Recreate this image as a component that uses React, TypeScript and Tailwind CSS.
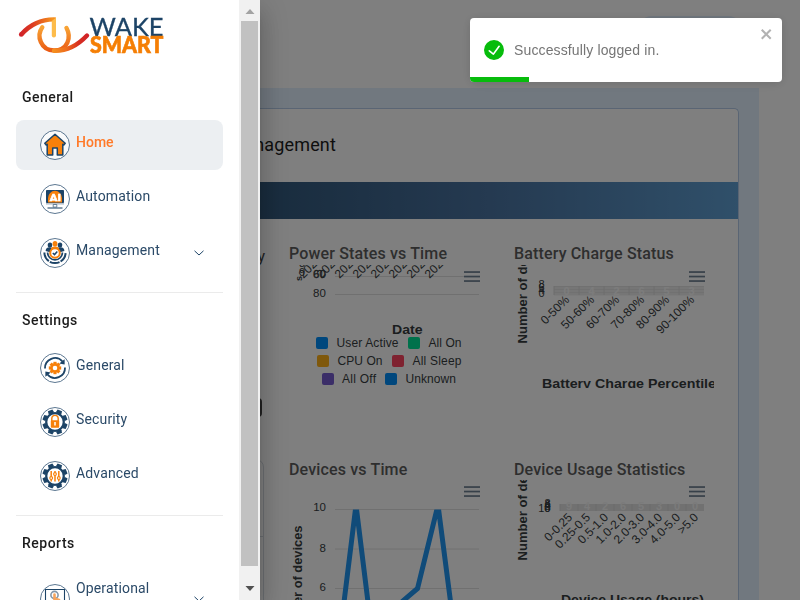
import type { ReactNode } from "react";

const NAVY = "#1d4467";
const ORANGE = "#f7800a";

function Badge({ children }: { children: ReactNode }) {
  return (
    <svg className="size-[30px] shrink-0" viewBox="0 0 30 30" fill="none">
      <circle cx="15" cy="15" r="14.5" fill="#fff" fillOpacity="0.7" stroke="#4a6884" strokeWidth="0.9" />
      {children}
    </svg>
  );
}

function HomeIcon() {
  return (
    <Badge>
      <path
        d="M15 4.2 L25.2 13.2 L23.8 15 L22.8 14.2 V25 H17.3 V18 H12.7 V25 H7.2 V14.2 L6.2 15 L4.8 13.2 Z"
        fill={ORANGE}
        stroke={NAVY}
        strokeWidth="1.5"
        strokeLinejoin="round"
      />
    </Badge>
  );
}

function AutomationIcon() {
  return (
    <Badge>
      <rect x="6" y="6" width="18" height="13" rx="0.8" fill={NAVY} />
      <path d="M8 18.4 V14 a7 7.2 0 0 1 14 0 V18.4 Z" fill={ORANGE} />
      <text x="9.8" y="16.8" fontSize="8.5" fontWeight="900" textLength="11" lengthAdjust="spacingAndGlyphs" fill="#fff" stroke="#fff" strokeWidth="0.4" fontFamily="Roboto, sans-serif">
        AI
      </text>
      <rect x="6" y="19" width="18" height="1.6" fill="#b7c2cd" />
      <path d="M13.2 20.5 h3.6 v2.6 h-3.6 z" stroke="#4a6884" strokeWidth="0.8" />
      <path d="M7.5 24 h15" stroke="#4a6884" strokeWidth="1.3" />
    </Badge>
  );
}

function ManagementIcon() {
  return (
    <Badge>
      <ellipse cx="10" cy="7" rx="2.3" ry="2.6" fill={NAVY} />
      <ellipse cx="20" cy="7" rx="2.3" ry="2.6" fill={NAVY} />
      <path d="M5.6 13 q0-3.8 4-3.8 t3.4 3 l-3 2z M24.4 13 q0-3.8-4-3.8 t-3.4 3 l3 2z" fill={NAVY} />
      <ellipse cx="15" cy="5.8" rx="2.4" ry="2.8" fill={ORANGE} />
      <path d="M10.8 11.8 q0-3.4 4.2-3.4 t4.2 3.4z" fill={ORANGE} />
      <circle cx="15" cy="15" r="4.8" fill="#fff" stroke={ORANGE} strokeWidth="2" />
      <path d="M12.8 15 l1.7 1.6 2.8-3.2" stroke={NAVY} strokeWidth="1.5" />
      <path d="M7.6 14.5 a7.4 7.4 0 0 0 14.8 0" stroke={NAVY} strokeWidth="1.7" />
      <path d="M4.4 14.5 a10.6 10.6 0 0 0 21.2 0" stroke={NAVY} strokeWidth="2" strokeDasharray="10 1.2" />
    </Badge>
  );
}

const TEETH = [0, 45, 90, 135, 180, 225, 270, 315];

function GeneralIcon() {
  return (
    <Badge>
      <path d="M5 15.5 a10 10 0 0 1 17.5-7" stroke={NAVY} strokeWidth="1.8" />
      <path d="M24.6 6.3 l0 5.2 -5.4-1z" fill={NAVY} />
      <path d="M25 14.5 a10 10 0 0 1-17.5 7" stroke={NAVY} strokeWidth="1.8" />
      <path d="M5.4 23.7 l0-5.2 5.4 1z" fill={NAVY} />
      {TEETH.map((a) => (
        <rect key={a} x="13.4" y="8.8" width="3.2" height="3" fill={ORANGE} transform={`rotate(${a} 15 15)`} />
      ))}
      <circle cx="15" cy="15" r="3.5" stroke={ORANGE} strokeWidth="2.4" />
    </Badge>
  );
}

function BigGear() {
  return (
    <>
      {TEETH.map((a) => (
        <path key={a} d="M12.6 2.4 h4.8 l0.4 2.4 l-1 2.7 h-3.6 l-1-2.7z" fill={NAVY} transform={`rotate(${a + 22.5} 15 15)`} />
      ))}
      <circle cx="15" cy="15" r="8.8" fill="#fff" stroke={NAVY} strokeWidth="2.3" />
    </>
  );
}

function SecurityIcon() {
  return (
    <Badge>
      <BigGear />
      <path d="M11.8 14 v-2.4 a3.2 3.2 0 0 1 6.4 0 V14" stroke={ORANGE} strokeWidth="1.4" />
      <rect x="10.8" y="13.2" width="8.4" height="7.6" rx="0.8" fill={ORANGE} />
      <path d="M15 15 v3.4" stroke="#fff" strokeWidth="1.5" />
    </Badge>
  );
}

function AdvancedIcon() {
  return (
    <Badge>
      <BigGear />
      <path d="M11.2 10 v10.5 M15 10 v10.5 M18.8 10 v10.5" stroke={ORANGE} strokeWidth="1.5" />
      <g fill="#fff" stroke={ORANGE} strokeWidth="1.1">
        <circle cx="11.2" cy="17" r="1.4" />
        <circle cx="15" cy="13" r="1.4" />
        <circle cx="18.8" cy="17" r="1.4" />
      </g>
    </Badge>
  );
}

function OperationalIcon() {
  return (
    <Badge>
      <path d="M5.5 23 V5.5 h19 V23" stroke={NAVY} strokeWidth="1.1" />
      <circle cx="14.5" cy="11" r="3.6" stroke="#8497a9" strokeWidth="1.6" />
      <path d="M13.2 20 V10.5 a1.3 1.3 0 0 1 2.6 0 V13.5 l4.4 1.5 V22 h-7.5 l-2.4-4.5z" fill="#f6a45c" />
    </Badge>
  );
}

function Logo() {
  return (
    <svg className="h-[42px] w-[150px]" viewBox="17 14 150 42" fill="none">
      <defs>
        <linearGradient id="swoosh" gradientUnits="userSpaceOnUse" x1="19" y1="34" x2="89" y2="34">
          <stop offset="0" stopColor="#d0202a" />
          <stop offset="0.2" stopColor="#dd3d20" />
          <stop offset="0.48" stopColor="#f5921e" />
          <stop offset="0.68" stopColor="#ee6c1c" />
          <stop offset="0.85" stopColor="#d7301f" />
          <stop offset="1" stopColor="#d0202a" />
        </linearGradient>
        <linearGradient id="ring" x1="0" y1="0" x2="0" y2="1">
          <stop offset="0" stopColor="#f8a435" />
          <stop offset="1" stopColor="#ea5b14" />
        </linearGradient>
      </defs>
      <circle cx="21.2" cy="34.5" r="2.3" fill="#d0202a" />
      <path d="M19.6 33 Q34 16.6 56 17.4 V21.6 Q37 20.6 22.8 36.2z" fill="url(#swoosh)" />
      <path d="M56 17.5 v18 a2.1 2.1 0 0 1-4.2 0 V21z" fill="#fdbc4b" />
      <path d="M42.3 27.3 C36 36 41 50.4 54 50.5 C68 50.5 71.5 37 66.5 28" stroke="url(#ring)" strokeWidth="4.4" strokeLinecap="round" />
      <path d="M54 50.7 C68 51.2 79 44 87 35.5" stroke="url(#swoosh)" strokeWidth="4.4" strokeLinecap="round" />
      <text x="89.5" y="35.6" fontSize="24.5" fontWeight="400" textLength="74" lengthAdjust="spacingAndGlyphs" fill={NAVY} stroke={NAVY} strokeWidth="0.3" fontFamily="Lato, sans-serif">
        WAKE
      </text>
      <text x="90" y="53" fontSize="21.8" fontWeight="900" textLength="73.5" lengthAdjust="spacingAndGlyphs" fill="#f57f05" stroke="#f57f05" strokeWidth="0.6" fontFamily="Lato, sans-serif">
        SMART
      </text>
    </svg>
  );
}

function Chevron() {
  return (
    <svg className="h-[6px] w-[10px] shrink-0" viewBox="0 0 10 6" fill="none">
      <path d="M0.5 0.8 L5 5 L9.5 0.8" stroke={NAVY} strokeWidth="1" />
    </svg>
  );
}

interface NavItemProps {
  icon: ReactNode;
  label: string;
  active?: boolean;
  expandable?: boolean;
  wrapped?: boolean;
}

function NavItem({ icon, label, active, expandable, wrapped }: NavItemProps) {
  return (
    <div className={`flex items-center rounded-lg pr-[19px] pl-6 ${wrapped ? "h-[66px]" : "h-[50px]"} ${active ? "bg-[#eceff2]" : ""}`}>
      {icon}
      <span
        className={`ml-[6px] w-[118px] text-[14px] ${wrapped ? "mb-[2px] leading-[20px]" : "mb-[6px] leading-[16px]"} ${
          active ? "font-medium tracking-normal text-[#ff7a29]" : "tracking-[0.15px] text-[#2b4a68]"
        }`}
      >
        {label}
      </span>
      {expandable && <Chevron />}
    </div>
  );
}

function NavGroup({ title, children }: { title: string; children: ReactNode }) {
  return (
    <section className="px-4">
      <h2 className="pl-[6px] text-[14px] leading-[20px] font-medium tracking-[0.5px] text-[#1c1c1c]">{title}</h2>
      <div className="mt-[13px] flex flex-col gap-1">{children}</div>
    </section>
  );
}

function Sidebar() {
  return (
    <aside className="fixed inset-y-0 left-0 z-20 flex w-[260px] overflow-hidden bg-white shadow-[0_8px_10px_-5px_rgba(0,0,0,0.2),0_16px_24px_2px_rgba(0,0,0,0.14),0_6px_30px_5px_rgba(0,0,0,0.12)]">
      <div className="h-full w-[239px] overflow-hidden">
        <div className="h-[87px] pt-[14px] pl-[17px]">
          <Logo />
        </div>
        <NavGroup title="General">
          <NavItem icon={<HomeIcon />} label="Home" active />
          <NavItem icon={<AutomationIcon />} label="Automation" />
          <NavItem icon={<ManagementIcon />} label="Management" expandable />
        </NavGroup>
        <hr className="mx-4 mt-[14px] mb-[17px] border-[#ebebeb]" />
        <NavGroup title="Settings">
          <NavItem icon={<GeneralIcon />} label="General" />
          <NavItem icon={<SecurityIcon />} label="Security" />
          <NavItem icon={<AdvancedIcon />} label="Advanced" />
        </NavGroup>
        <hr className="mx-4 mt-[14px] mb-[17px] border-[#ebebeb]" />
        <NavGroup title="Reports">
          <NavItem icon={<OperationalIcon />} label="Operational Reports" expandable wrapped />
        </NavGroup>
      </div>
      <div className="flex h-full w-[21px] flex-col items-center bg-[#f1f1f1]">
        <svg className="h-[21px] w-[10px]" viewBox="0 0 10 21">
          <path d="M0.5 14 L5 9 L9.5 14z" fill="#a3a3a3" />
        </svg>
        <div className="h-[545px] w-[17px] bg-[#c1c1c1]" />
        <svg className="h-[34px] w-[10px]" viewBox="0 0 10 34">
          <path d="M0.5 20 L5 25 L9.5 20z" fill="#505050" />
        </svg>
      </div>
    </aside>
  );
}

function Toast() {
  return (
    <div className="fixed top-[18px] right-[18px] z-30 flex h-[64px] w-[312px] items-center overflow-hidden rounded bg-white pl-[14px] font-['Liberation_Sans',sans-serif] shadow-[0_1px_10px_0_rgba(0,0,0,0.1),0_2px_15px_0_rgba(0,0,0,0.05)]">
      <svg className="size-5" viewBox="0 0 24 24" fill="#07bc0c">
        <path d="M12 0a12 12 0 1012 12A12.014 12.014 0 0012 0zm6.927 8.2l-6.845 9.289a1.011 1.011 0 01-1.43.188l-4.888-3.908a1 1 0 111.25-1.562l4.076 3.261 6.227-8.451a1 1 0 111.61 1.183z" />
      </svg>
      <span className="ml-[10px] text-[14px] tracking-[0.13px] text-[#757575]">Successfully logged in.</span>
      <svg className="absolute top-2 right-2 h-4 w-[14px]" viewBox="0 0 14 16" fill="#b2b2b2">
        <path fillRule="evenodd" d="M7.71 8.23l3.75 3.75-1.48 1.48-3.75-3.75-3.75 3.75L1 11.98l3.75-3.75L1 4.48 2.48 3l3.75 3.75L9.98 3l1.48 1.48-3.75 3.75z" />
      </svg>
      <div className="absolute bottom-0 left-0 h-[5px] w-[59px] bg-[#07bc0c]" />
    </div>
  );
}

function MenuGlyph({ x, y }: { x: number; y: number }) {
  return (
    <g fill="#6e8192">
      <rect x={x} y={y} width="16" height="1.7" />
      <rect x={x} y={y + 4.5} width="16" height="1.7" />
      <rect x={x} y={y + 9} width="16" height="1.7" />
    </g>
  );
}

const SANS = "'Liberation Sans', Arial, sans-serif";

const LEGEND = [
  { x: 316, y: 337, color: "#008ffb", label: "User Active", tx: 336.5, w: 62 },
  { x: 408, y: 337, color: "#00e396", label: "All On", tx: 428.5, w: 33 },
  { x: 317, y: 355, color: "#feb019", label: "CPU On", tx: 337.5, w: 45 },
  { x: 392, y: 355, color: "#ff4560", label: "All Sleep", tx: 412.5, w: 49 },
  { x: 322, y: 373, color: "#775dd0", label: "All Off", tx: 342, w: 34 },
  { x: 385, y: 373, color: "#008ffb", label: "Unknown", tx: 405.5, w: 50.5 },
];

function PowerChart() {
  return (
    <svg className="mt-px h-[130px] w-[200px] overflow-hidden" viewBox="289 265 200 130" fontFamily={SANS} fontSize="12" fill="#373d3f">
      <path d="M335 276.5 H479 M335 294.5 H479" stroke="#e0e0e0" />
      {[300, 318, 336, 354, 372, 390, 408, 426].map((x) => (
        <text key={x} transform={`translate(${x + 3.5} 279) rotate(-45)`}>
          2023
        </text>
      ))}
      <text x="313" y="278" fontSize="11.5" textLength="13" stroke="#373d3f" strokeWidth="0.4">60</text>
      <text x="313" y="297" fontSize="11.5" textLength="13">80</text>
      <text transform="translate(302 281) rotate(-90)" fontWeight="700" fontSize="9">s</text>
      <text x="299" y="276" fontSize="11">9</text>
      <text x="299" y="267" fontSize="11">8</text>
      <MenuGlyph x={464} y={271.2} />
      <text x="392" y="334" fontWeight="900" textLength="30.5" lengthAdjust="spacingAndGlyphs">Date</text>
      {LEGEND.map((l) => (
        <g key={l.label}>
          <rect x={l.x} y={l.y} width="12" height="12" rx="2" fill={l.color} />
          <text x={l.tx} y={l.y + 10} textLength={l.w}>{l.label}</text>
        </g>
      ))}
    </svg>
  );
}

const BATTERY = ["0-50%", "50-60%", "60-70%", "70-80%", "80-90%", "90-100%"];
const BATTERY_COUNTS = ["0", "4", "2", "6", "5", "3"];

function BatteryChart() {
  return (
    <svg className="mt-px h-[123px] w-[200px] overflow-hidden" viewBox="514 265 200 123" fontFamily={SANS} fontSize="12" fill="#373d3f">
      <rect x="554" y="286" width="150" height="9.5" fill="#ededed" />
      <path d="M554 286.5 H704 M554 289.5 H704 M554 292.5 H704" stroke="#dedede" strokeWidth="0.8" />
      {BATTERY_COUNTS.map((n, i) => (
        <g key={i}>
          <path d={`M${554 + i * 25} 286 v9`} stroke="#dadada" />
          <text x={566.5 + i * 25} y="295" textAnchor="middle" fontWeight="700" fontSize="11" fill="#f9f9f9">{n}</text>
        </g>
      ))}
      {["8", "6", "4", "0"].map((n, i) => (
        <text key={n} x="544.5" y={287.5 + i * 3} fontSize="11" textAnchor="end">{n}</text>
      ))}
      {BATTERY.map((l, i) => (
        <text key={l} transform={`translate(${570 + i * 25} 300.5) rotate(-45)`} textAnchor="end">{l}</text>
      ))}
      <text transform="translate(527 343.5) rotate(-90)" fontWeight="900" textLength="117" lengthAdjust="spacingAndGlyphs">Number of devices</text>
      <MenuGlyph x={689} y={271.2} />
      <text x="542" y="388" fontWeight="900" textLength="174" lengthAdjust="spacingAndGlyphs">Battery Charge Percentile</text>
    </svg>
  );
}

function DevicesChart() {
  return (
    <svg className="h-[120px] w-[200px] overflow-hidden" viewBox="289 480 200 120" fontFamily={SANS} fontSize="12" fill="#373d3f">
      <path d="M335 509.5 H479 M335 549 H479 M335 588.5 H479" stroke="#e0e0e0" />
      <text x="326" y="511" fontSize="11.5" textAnchor="end">10</text>
      <text x="326" y="551.5" fontSize="11.5" textAnchor="end">8</text>
      <text x="326" y="590.5" fontSize="11.5" textAnchor="end">6</text>
      <text transform="translate(302 640.5) rotate(-90)" fontWeight="900" textLength="115" lengthAdjust="spacingAndGlyphs">Number of devices</text>
      <clipPath id="plot"><rect x="335" y="509.5" width="150" height="100" /></clipPath>
      <path d="M336 667 L356 505 L376 667 L397 606 L417.5 588.5 L438 505 L459 667" fill="none" stroke="#2196f3" strokeWidth="5" clipPath="url(#plot)" />
      <MenuGlyph x={464} y={486.2} />
    </svg>
  );
}

const USAGE = ["0-0.25", "0.25-0.5", "0.5-1.0", "1.0-2.0", "2.0-3.0", "3.0-4.0", "4.0-5.0", ">5.0"];
const USAGE_COUNTS = ["9", "4", "2", "6", "5", "3", "0", "0"];

function UsageChart() {
  return (
    <svg className="h-[120px] w-[200px] overflow-hidden" viewBox="514 480 200 120" fontFamily={SANS} fontSize="12" fill="#373d3f">
      <rect x="560" y="504" width="144" height="7" fill="#e2e2e2" />
      {USAGE_COUNTS.map((n, i) => (
        <g key={i}>
          <path d={`M${560 + i * 18} 504 v7`} stroke="#d6d6d6" />
          <text x={569 + i * 18} y="510" textAnchor="middle" fontWeight="700" fontSize="11" fill="#f6f6f6">{n}</text>
        </g>
      ))}
      {["8", "6", "4", "2", "0"].map((n, i) => (
        <text key={n} x="550.5" y={506.5 + i * 1.3} fontSize="11" textAnchor="end">{n}</text>
      ))}
      <text x="550.5" y="512" fontSize="11" textAnchor="end">10</text>
      {USAGE.map((l, i) => (
        <text key={l} transform={`translate(${573 + i * 18} 518) rotate(-45)`} textAnchor="end">{l}</text>
      ))}
      <text transform="translate(527 560.5) rotate(-90)" fontWeight="900" textLength="117" lengthAdjust="spacingAndGlyphs">Number of devices</text>
      <MenuGlyph x={689} y={486.2} />
      <text x="561" y="604" fontWeight="900" textLength="143" lengthAdjust="spacingAndGlyphs">Device Usage (hours)</text>
    </svg>
  );
}

function ChartPanel({ title, children }: { title: string; children: ReactNode }) {
  return (
    <section className="h-[216px] w-[225px] overflow-hidden">
      <h3 className="pt-[6px] text-[16px] leading-[20px] font-medium tracking-[0.15px] whitespace-nowrap text-[#5c5c5c]">{title}</h3>
      {children}
    </section>
  );
}

function Dashboard() {
  return (
    <main className="h-[600px] w-[800px] overflow-hidden bg-white pt-4">
      <div className="ml-[636px] h-10 w-[108px] rounded-2xl bg-[#e2f0fe]" />
      <div className="mt-8 h-[512px] w-[759px] bg-[#e2f0fe] px-5 pt-5">
        <div className="h-[492px] overflow-hidden rounded-t-[5px] border border-b-0 border-[#b4cbe8] bg-white">
          <h1 className="h-[73px] w-[315px] pt-[22px] text-right text-[18px] leading-[28px] tracking-[0.15px] text-[#1c1c1c]">
            Power Management
          </h1>
          <div className="h-[37px] bg-gradient-to-r from-[#2f5577] from-30% via-[#4a74a2] via-65% to-[#60a0d4]" />
          <div className="flex h-[381px] pt-[19px]">
            <div className="flex w-[243px] shrink-0 flex-col text-right text-[#5c5c5c]">
              <span className="-mr-px pt-[9px] text-[16px] leading-[20px] text-[#424242]">Summary</span>
              <div className="mt-[131px] h-[19px] w-[241px] shrink-0 rounded bg-[#424242]" />
              <div className="mt-[42px] h-[160px] shrink-0 rounded-lg border border-[#d5dbe2]">
                <div className="h-[77px] border-b border-[#d5dbe2]" />
              </div>
            </div>
            <div className="ml-[25px] grid h-[432px] shrink-0 grid-cols-[225px_225px] content-start">
              <ChartPanel title="Power States vs Time">
                <PowerChart />
              </ChartPanel>
              <ChartPanel title="Battery Charge Status">
                <BatteryChart />
              </ChartPanel>
              <ChartPanel title="Devices vs Time">
                <DevicesChart />
              </ChartPanel>
              <ChartPanel title="Device Usage Statistics">
                <UsageChart />
              </ChartPanel>
            </div>
          </div>
        </div>
      </div>
    </main>
  );
}

export default function App() {
  return (
    <div className="h-[600px] w-[800px] overflow-hidden font-[Roboto,sans-serif]">
      <Dashboard />
      <div className="fixed inset-0 z-10 bg-black/50" />
      <Sidebar />
      <Toast />
    </div>
  );
}
